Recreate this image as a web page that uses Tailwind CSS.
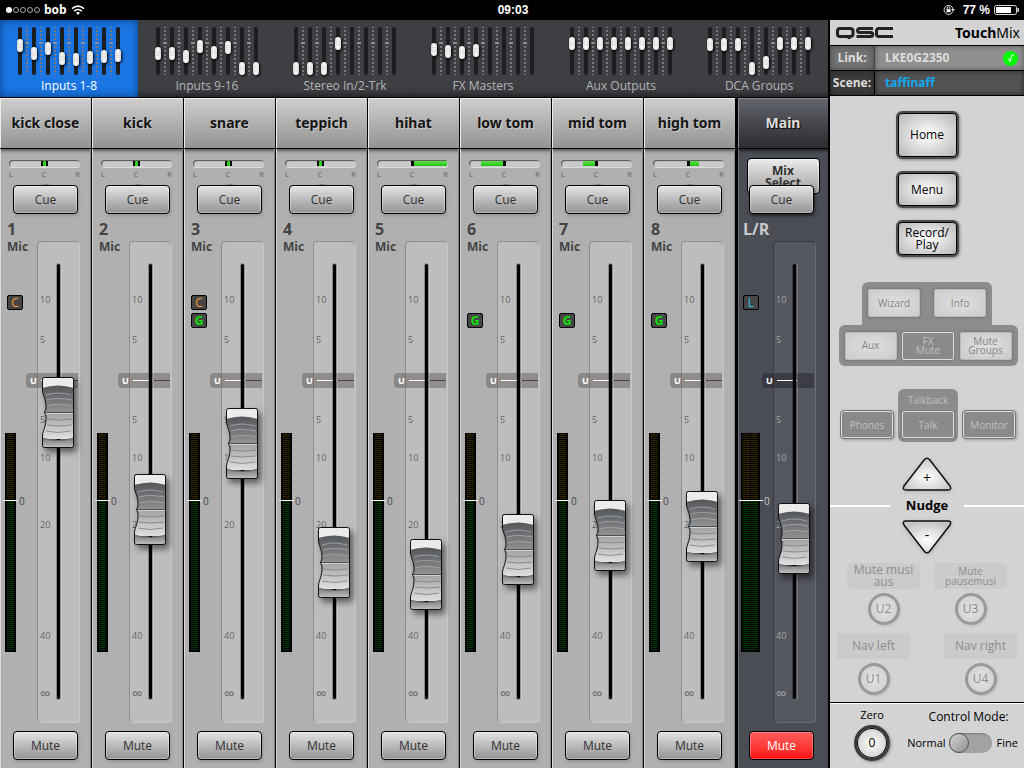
<!DOCTYPE html>
<html lang="en">
<head>
    <meta charset="UTF-8">
    <meta name="viewport" content="width=device-width, initial-scale=1.0">
    <title>TouchMix - Inputs 1-8</title>
    <script src="https://cdn.jsdelivr.net/npm/@tailwindcss/browser@4"></script>
</head>
<body class="min-h-screen flex flex-col bg-black text-[#222] font-['Open_Sans','Noto_Sans',sans-serif]">
    <!-- Shared artwork -->
    <svg class="absolute w-0 h-0">
        <defs>
            <linearGradient id="cap-upper" x1="0" y1="0" x2="0" y2="1">
                <stop offset="0.1" stop-color="#484b4e"/>
                <stop offset="1" stop-color="#919395"/>
            </linearGradient>
            <linearGradient id="cap-lower" x1="0" y1="0" x2="0" y2="1">
                <stop offset="0" stop-color="#a2a2a5"/>
                <stop offset="1" stop-color="#e0e0e2"/>
            </linearGradient>
            <linearGradient id="cap-foot" x1="0" y1="0" x2="0" y2="1">
                <stop offset="0" stop-color="#77797b"/>
                <stop offset="1" stop-color="#c2c4c5"/>
            </linearGradient>
            <radialGradient id="nudge-fill" cx="0.5" cy="0.6" r="0.6">
                <stop offset="0" stop-color="#ffffff"/>
                <stop offset="1" stop-color="#c4c4c4"/>
            </radialGradient>
            <clipPath id="cap-clip">
                <path d="M2.5 .5h27a2 2 0 0 1 2 2v66a2 2 0 0 1-2 2h-27a2 2 0 0 1-2-2V58C1 53 4.500 49 4 39L2.500 35.500 4 32C4.500 23 1 19 .5 14V2.500a2 2 0 0 1 2-2z"/>
            </clipPath>
        </defs>
        <symbol id="fader-cap" viewBox="0 0 32 71">
            <g clip-path="url(#cap-clip)">
                <rect width="32" height="36" fill="url(#cap-upper)"/>
                <rect y="36" width="32" height="26" fill="url(#cap-lower)"/>
                <path d="M0 0h32v11Q16 6 0 11z" fill="#edebe9"/>
                <path d="M0 61Q16 66 32 61V71H0z" fill="url(#cap-foot)"/>
                <path d="M0 61Q16 66 32 61" fill="none" stroke="#66686a"/>
                <g fill="none" stroke="#a9abac" stroke-width=".8">
                    <path d="M4 18Q16 14 29 18M5 23Q16 20 30 23M5 29Q16 26 30 29"/>
                </g>
                <g fill="none" stroke="#7c7d80" stroke-width=".8">
                    <path d="M5 42Q16 44 30 42M5 48Q16 50 30 48M4 54Q16 57 29 54"/>
                </g>
                <path d="M3 35.500H32" stroke="#4e5153"/>
                <path d="M3 36.500H32" stroke="#cfd1d3"/>
            </g>
            <path d="M2.500 .5h27a2 2 0 0 1 2 2v66a2 2 0 0 1-2 2h-27a2 2 0 0 1-2-2V58C1 53 4.500 49 4 39L2.500 35.500 4 32C4.500 23 1 19 .5 14V2.500a2 2 0 0 1 2-2z" fill="none" stroke="#111"/>
        </symbol>
    </svg>

    <!-- Device status bar -->
    <header class="h-5 shrink-0 grid grid-cols-3 items-center pl-1.5 pr-1 text-white text-xs leading-5 font-bold">
        <div class="flex items-center gap-1">
            <svg class="w-[34px] h-2" viewBox="0 0 34 8" fill="none" stroke="#aaa">
                <circle cx="3" cy="4" r="3" fill="#fff" stroke="none"/>
                <circle cx="10" cy="4" r="2.500"/>
                <circle cx="17" cy="4" r="2.500"/>
                <circle cx="24" cy="4" r="2.500"/>
                <circle cx="31" cy="4" r="2.500"/>
            </svg>
            <span>bob</span>
            <svg class="w-3.5 h-2.5" viewBox="0 0 14 10" fill="none" stroke="#fff" stroke-width="1.600">
                <path d="M1 3.600Q7-1.400 13 3.600M3.200 6Q7 3 10.800 6"/>
                <path d="M5 7.800Q7 6.200 9 7.800L7 10z" fill="#fff" stroke="none"/>
            </svg>
        </div>
        <div class="text-center font-['Liberation_Sans',sans-serif]">09:03</div>
        <div class="flex items-center justify-end gap-1 font-['Liberation_Sans',sans-serif]">
            <svg class="w-3 h-3 mr-1" viewBox="0 0 12 12" fill="none" stroke="#ddd">
                <path d="M9.800 7.500A4.500 4.500 0 1 1 10 5"/>
                <path d="M8 5h4l-2 2.500z" fill="#ddd" stroke="none"/>
                <rect x="3.500" y="5.200" width="4" height="3" fill="#fff" stroke="none"/>
                <path d="M4.200 5.200V4a1.300 1.300 0 0 1 2.600 0v1.200"/>
            </svg>
            <span>77 %</span>
            <svg class="w-[26px] h-2.5" viewBox="0 0 26 10">
                <rect x=".5" y=".5" width="22" height="9" rx="2" fill="none" stroke="#ddd"/>
                <rect x="2" y="2" width="15" height="6" fill="#fff"/>
                <path d="M24 3q1.500 2 0 4z" fill="#ddd" stroke="#ddd"/>
            </svg>
        </div>
    </header>

    <main class="flex-1 flex">
        <div class="flex-1 flex flex-col border-r-2 border-black">
            <nav id="banks" class="h-[78px] grid grid-cols-6 bg-[#3e3f43] border-b border-black"></nav>
            <div id="strips" class="flex-1 flex"></div>
        </div>

        <aside class="w-[194px] shrink-0 flex flex-col bg-[#d3d3d3]">
            <div class="h-[26px] flex items-center justify-between pl-1.5 pr-1 border-b border-black">
                <svg class="w-[57px] h-3" viewBox="0 0 57 12" fill="none" stroke="#222" stroke-width="3" role="img" aria-label="QSC">
                    <path d="M4 1.500H14Q17 1.500 17 4V7Q17 9.500 14 9.500H4Q1.500 9.500 1.500 7V4Q1.500 1.500 4 1.500z"/>
                    <path d="M11 10.500l1 1.500h3l-1-1.500z" fill="#222" stroke="none"/>
                    <path d="M37 1.500H24Q21.500 1.500 21.500 3.500T24 5.500H34.500Q36.800 5.500 36.800 7.500T34.500 9.500H20.500"/>
                    <path d="M57 1.500H43Q40.500 1.500 40.500 4V7Q40.500 9.500 43 9.500H57"/>
                </svg>
                <div class="text-sm font-['Noto_Sans',sans-serif] text-black"><b>Touch</b>Mix</div>
            </div>
            <div class="h-[25px] flex border-b border-black text-xs font-bold text-[#ddd]">
                <div class="w-[45px] flex items-center justify-center bg-[#737373] border-r border-[#444] shadow-[inset_0_0_6px_#444]">Link:</div>
                <div class="flex-1 flex items-center justify-between pl-2.5 pr-1.5 bg-[#8f8f8f] shadow-[inset_0_0_5px_#555]">
                    LKE0G2350
                    <svg class="w-[15px] h-[15px]" viewBox="0 0 15 15">
                        <circle cx="7.500" cy="7.500" r="7.500" fill="#0f0"/>
                        <path d="M4.500 8l1-.5 1.500 3L9 4h2" fill="none" stroke="#fff"/>
                    </svg>
                </div>
            </div>
            <div class="h-[25px] flex border-b border-black text-xs font-bold text-[#ddd]">
                <div class="w-[45px] flex items-center justify-center bg-[#3c3c3c] border-r border-black shadow-[inset_0_0_6px_#222]">Scene:</div>
                <div class="flex-1 flex items-center pl-2.5 bg-[#525252] text-[#12a8ee] shadow-[inset_0_0_5px_#222]">taffinaff</div>
            </div>

            <div class="flex flex-col items-center gap-3 pt-[15px] text-xs leading-3 text-black">
                <button class="w-[63px] h-12 rounded-md border-2 border-[#4c4c4c] bg-[radial-gradient(#fff,#b4b4b4)] shadow-[inset_0_0_0_1px_#000,1px_1px_3px_#888]">Home</button>
                <button class="w-[63px] h-[37px] rounded-md border-2 border-[#4c4c4c] bg-[radial-gradient(#fff,#b4b4b4)] shadow-[inset_0_0_0_1px_#000,1px_1px_3px_#888]">Menu</button>
                <button class="w-[63px] h-[37px] rounded-md border-2 border-[#4c4c4c] bg-[radial-gradient(#fff,#b4b4b4)] shadow-[inset_0_0_0_1px_#000,1px_1px_3px_#888]">Record/<br>Play</button>
            </div>

            <div class="mt-[25px] flex flex-col items-center text-[10px] leading-[9px] text-[#858585]">
                <div class="w-[130px] h-[43px] px-1.5 pt-[7px] flex justify-between items-start rounded-t-md bg-[#8c8c8c]">
                    <button class="w-[52px] h-7 rounded-xs border border-[#bbb] bg-[radial-gradient(#dfdfdf,#cbcbcb)] shadow-[0_0_3px_#666]">Wizard</button>
                    <button class="w-[52px] h-7 rounded-xs border border-[#bbb] bg-[radial-gradient(#dfdfdf,#cbcbcb)] shadow-[0_0_3px_#666]">Info</button>
                </div>
                <div class="w-[179px] h-[41px] ml-0.5 px-1.5 flex justify-between items-center rounded-md bg-[#8c8c8c]">
                    <button class="w-[52px] h-7 rounded-xs border border-[#bbb] bg-[radial-gradient(#dfdfdf,#cbcbcb)] shadow-[0_0_3px_#666]">Aux</button>
                    <button class="w-[52px] h-7 rounded-xs border border-[#ddd] bg-[#8a8a8a] text-[#c0c0c0] shadow-[0_0_2px_#555]">FX<br>Mute</button>
                    <button class="w-[52px] h-7 rounded-xs border border-[#bbb] bg-[radial-gradient(#dfdfdf,#cbcbcb)] shadow-[0_0_3px_#666]">Mute<br>Groups</button>
                </div>
            </div>

            <div class="mt-[23px] ml-0.5 flex justify-center items-end gap-1 text-[10px] leading-[10px] text-[#c0c0c0]">
                <button class="w-[54px] h-[29px] mb-[3px] rounded-sm border border-[#777] bg-[#8a8a8a] shadow-[inset_0_0_0_1px_#ddd,1px_1px_3px_#999]">Phones</button>
                <div class="w-[60px] h-[53px] pt-1.5 flex flex-col items-center gap-1.5 rounded-md bg-[#8c8c8c]">
                    <span>Talkback</span>
                    <button class="w-[52px] h-[27px] rounded-xs border border-[#ddd] bg-[#8a8a8a] shadow-[0_0_2px_#555]">Talk</button>
                </div>
                <button class="w-[54px] h-[29px] mb-[3px] rounded-sm border border-[#777] bg-[#8a8a8a] shadow-[inset_0_0_0_1px_#ddd,1px_1px_3px_#999]">Monitor</button>
            </div>

            <div class="mt-3.5 flex flex-col items-center text-black">
                <button class="relative w-[50px] h-9" aria-label="Nudge up">
                    <svg class="w-full h-full drop-shadow-sm" viewBox="0 0 50 36">
                        <path d="M22.500 3.500Q25 1 27.500 3.500L48 30Q50 34 46 34H4Q0 34 2 30z" fill="url(#nudge-fill)" stroke="#111" stroke-width="1.500"/>
                    </svg>
                    <span class="absolute inset-x-0 top-3 text-sm leading-5">+</span>
                </button>
                <div class="w-full h-[27px] flex items-center gap-3.5">
                    <span class="flex-1 h-0.5 bg-white"></span>
                    <span class="w-[46px] text-center text-[13px] font-bold">Nudge</span>
                    <span class="flex-1 h-0.5 bg-white"></span>
                </div>
                <button class="relative w-[50px] h-9" aria-label="Nudge down">
                    <svg class="w-full h-full drop-shadow-sm" viewBox="0 0 50 36">
                        <path d="M22.500 32.500Q25 35 27.500 32.500L48 6Q50 2 46 2H4Q0 2 2 6z" fill="url(#nudge-fill)" stroke="#111" stroke-width="1.500"/>
                    </svg>
                    <span class="absolute inset-x-0 top-1.5 text-sm leading-5">-</span>
                </button>
            </div>

            <!-- User buttons -->
            <div class="mt-2 flex justify-center gap-3.5 text-xs leading-3 text-[#8d8d8d]">
                <div class="flex flex-col items-center gap-1">
                    <div class="w-[73px] h-[26px] flex items-center justify-center text-center rounded-xs bg-[#cbcbcb]">Mute musi<br>aus</div>
                    <button class="w-8 h-8 rounded-full border-3 border-[#999] bg-[radial-gradient(#e2e2e2,#cecece)] shadow-[1px_1px_2px_#bbb]">U2</button>
                </div>
                <div class="flex flex-col items-center gap-1">
                    <div class="w-[73px] h-[26px] flex items-center justify-center text-center rounded-xs bg-[#cbcbcb] text-[10px] leading-[10px]">Mute<br>pausemusi</div>
                    <button class="w-8 h-8 rounded-full border-3 border-[#999] bg-[radial-gradient(#e2e2e2,#cecece)] shadow-[1px_1px_2px_#bbb]">U3</button>
                </div>
            </div>
            <div class="mt-2 px-[7px] flex justify-between text-xs leading-3 text-[#8d8d8d]">
                <div class="flex flex-col items-center gap-1">
                    <div class="w-[73px] h-[26px] flex items-center justify-center rounded-xs bg-[#cbcbcb]">Nav left</div>
                    <button class="w-8 h-8 rounded-full border-3 border-[#999] bg-[radial-gradient(#e2e2e2,#cecece)] shadow-[1px_1px_2px_#bbb]">U1</button>
                </div>
                <div class="flex flex-col items-center gap-1">
                    <div class="w-[73px] h-[26px] flex items-center justify-center rounded-xs bg-[#cbcbcb]">Nav right</div>
                    <button class="w-8 h-8 rounded-full border-3 border-[#999] bg-[radial-gradient(#e2e2e2,#cecece)] shadow-[1px_1px_2px_#bbb]">U4</button>
                </div>
            </div>

            <div class="mt-auto h-[66px] pl-6 pr-1.5 pt-1 flex justify-between border-t border-black shadow-[inset_0_1px_0_#fff] text-[11px] text-black">
                <div class="w-9 flex flex-col items-center">
                    <label for="zero" class="leading-4">Zero</label>
                    <button id="zero" class="w-9 h-9 mt-0.5 shrink-0 rounded-full border-3 border-[#3a3a3a] bg-[radial-gradient(#fff,#c0c0c0)] shadow-[inset_0_0_0_1px_#000,1px_1px_3px_#888] text-xs">0</button>
                </div>
                <div class="flex flex-col items-center">
                    <div class="mt-0.5 pl-3 text-xs leading-4">Control Mode:</div>
                    <label class="mt-2 flex items-center gap-[3px] leading-5">
                        Normal
                        <input type="checkbox" class="peer sr-only" aria-label="Fine control mode">
                        <span class="w-[43px] h-5 rounded-full bg-[#a3a3a3] shadow-[inset_1px_1px_2px_#777] before:block before:w-5 before:h-5 before:rounded-full before:border before:border-[#555] before:bg-linear-to-br before:from-[#d5d5d5] before:to-[#8f8f8f] peer-checked:before:translate-x-[23px]"></span>
                        <span class="ml-0.5">Fine</span>
                    </label>
                </div>
            </div>
        </aside>
    </main>

    <script>
        // cap positions are px from the top of the small slots
        const banks = [
            { name: 'Inputs 1-8', caps: [12, 20, 15, 25, 26, 24, 23, 22], active: true },
            { name: 'Inputs 9-16', caps: [20, 20, 23, 13, 19, 14, 35, 35] },
            { name: 'Stereo In/2-Trk', caps: [35, 35, 35, 10, null, null, null, null] },
            { name: 'FX Masters', caps: [16, 18, 19, 17, null, null, null, null] },
            { name: 'Aux Outputs', caps: [10, 10, 10, 10, 10, 10, 10, 10] },
            { name: 'DCA Groups', caps: [11, 11, 11, 35, 29, 10, 10, 10] },
        ];

        // pos: px from the top of the fader panel, pan: px left or right of centre
        const channels = [
            { name: 'kick close', label: '1', source: 'Mic', pan: 0, pos: 136, comp: true },
            { name: 'kick', label: '2', source: 'Mic', pan: 0, pos: 233 },
            { name: 'snare', label: '3', source: 'Mic', pan: 0, pos: 167, comp: true, gate: true },
            { name: 'teppich', label: '4', source: 'Mic', pan: 0, pos: 286 },
            { name: 'hihat', label: '5', source: 'Mic', pan: 33, pos: 298 },
            { name: 'low tom', label: '6', source: 'Mic', pan: -22, pos: 273, gate: true },
            { name: 'mid tom', label: '7', source: 'Mic', pan: -12, pos: 259, gate: true },
            { name: 'high tom', label: '8', source: 'Mic', pan: 9, pos: 250, gate: true },
            { name: 'Main', label: 'L/R', source: '', pos: 262, limiter: true, main: true, muted: true },
        ];

        const scale = [['10', 57], ['5', 97], ['5', 177], ['10', 215], ['20', 282], ['40', 393], ['∞', 451]];

        function miniFader(top, i) {
            const ticks = i < 7 ? `
                <div class="w-2 h-12 mx-[1px] bg-[radial-gradient(circle,#77797c_1px,transparent_1px)] bg-[size:2px_4px] bg-repeat-y bg-center flex flex-col">
                    <span class="w-1 h-0.5 mt-[15px] mx-auto bg-[#8d8f92]"></span>
                </div>` : '';
            const cap = top === null ? '' : `
                <span class="absolute -left-px w-1.5 h-[13px] rounded-[3px] bg-linear-to-r from-[#d8d8d8] via-white to-[#d8d8d8] shadow-[1px_1px_3px_#000] flex flex-col items-center justify-center gap-px" style="top: ${top}px">
                    <i class="w-1 h-px bg-[#ddd]"></i><i class="w-1 h-px bg-[#ddd]"></i><i class="w-1 h-px bg-[#ddd]"></i>
                </span>`;
            return `<div class="relative w-1 h-12 rounded-full bg-[#1d1e20]">${cap}</div>${ticks}`;
        }

        function bank(b) {
            const look = b.active
                ? 'bg-[#1a75e2] text-white shadow-[inset_0_0_8px_#0b3f85]'
                : 'text-[#b4b4b6] shadow-[inset_0_-8px_6px_-6px_#1c1d20]';
            return `
                <a href="#" class="flex flex-col items-center pt-[7px] ${look}">
                    <div class="flex">${b.caps.map(miniFader).join('')}</div>
                    <span class="mt-[3px] text-xs leading-4">${b.name}</span>
                </a>`;
        }

        function panBar(pan) {
            if (pan === 0) {
                return '<span class="absolute inset-y-px left-8 w-[7px] bg-[#2fd21a] border-x-2 border-black"></span>';
            }
            const side = pan > 0 ? `left: 37px; width: ${pan}px` : `right: 37px; width: ${-pan}px`;
            return `
                <span class="absolute inset-y-px left-[34px] w-[3px] bg-black"></span>
                <span class="absolute inset-y-px bg-linear-to-b from-[#5ae048] to-[#1fc60a]" style="${side}"></span>`;
        }

        function meter(count) {
            return `<div class="flex gap-px h-[219px] px-0.5 py-px bg-black">` + `
                <div class="w-[7px] flex flex-col">
                    <div class="h-[67px] bg-[repeating-linear-gradient(#332900_0_1px,#000_1px_2px)]"></div>
                    <div class="flex-1 bg-[repeating-linear-gradient(#033a06_0_1px,#000_1px_2px)]"></div>
                </div>`.repeat(count) + '</div>';
        }

        function badge(letter, on, color) {
            return `<span class="w-4 h-[15px] flex items-center justify-center rounded-xs border text-xs leading-3 ${color} ${on ? 'border-black bg-[#464646]' : 'invisible'}">${letter}</span>`;
        }

        function strip(c, i) {
            const m = c.main;
            const top = m ? `
                <div class="h-9 pt-[9px] flex justify-center">
                    <button class="w-[73px] h-9 pt-1.5 shrink-0 flex justify-center rounded-sm border border-black bg-linear-to-b from-[#ececec] to-[#a0a0a0] text-xs leading-3 font-bold text-[#333] shadow-[inset_0_0_0_1px_#fff6]">Mix<br>Select</button>
                </div>` : `
                <div class="h-9 pt-[11px] px-[9px]">
                    <div class="relative w-[71px] h-[7px] rounded-sm bg-[#c9c9cd] shadow-[inset_1px_1px_1px_#555,0_1px_0_#ddd]">${panBar(c.pan)}</div>
                    <div class="w-[71px] mt-0.5 flex justify-between text-[8px] leading-[10px] text-[#666]">
                        <span>L</span><span>C</span><span>R</span>
                    </div>
                    <div class="w-2 h-0.5 mt-[5px] mx-auto rounded-t-full bg-[#888]"></div>
                </div>`;
            const width = m ? 'basis-[90px]' : i === 7 ? 'basis-[94px] border-r-3' : 'basis-[92px] border-r';
            return `
                <section class="${width} grow border-black flex flex-col items-center ${m ? 'bg-[#4b4d55] text-[#c8c8c8]' : 'bg-[#b0b0b0] text-[#444]'}">
                    <h2 class="w-full h-[51px] flex items-center justify-center border-b border-black text-sm font-bold font-['Noto_Sans',sans-serif] ${m ? 'bg-linear-to-b from-[#64666e] to-[#2b2c30] text-[#ddd] [text-shadow:1px_1px_1px_#000] shadow-[inset_1px_1px_0_#8b8d93]' : 'bg-linear-to-b from-[#cfcfcd] to-[#939393] text-[#161616] [text-shadow:1px_1px_0_#ccc] shadow-[inset_1px_1px_0_#eee]'}">${c.name}</h2>
                    <div class="w-full flex-1 flex flex-col items-center ${m ? 'shadow-[inset_1px_0_0_#70727a,inset_0_4px_4px_-3px_#111]' : 'shadow-[inset_1px_0_0_#ddd,inset_-1px_0_0_#888,inset_0_4px_4px_-3px_#333]'}">
                        <div class="${m ? 'w-[90px]' : 'w-[91px]'}">
                            ${top}
                            <button class="relative block w-[65px] h-[29px] ${m ? 'ml-[11px]' : 'ml-[13px]'} rounded-sm border border-black bg-linear-to-b from-[#e4e4e4] to-[#949494] text-xs text-[#333] ${m ? 'shadow-[inset_0_0_0_1px_#fff5,1px_2px_3px_#0008]' : 'shadow-[inset_0_0_0_1px_#fff5,1px_2px_3px_#888a]'}">Cue</button>
                            <div class="relative flex h-[508px]">
                                <div class="${m ? 'w-[35px] pl-[5px]' : 'w-[37px] pl-[7px]'} pt-[7px] flex flex-col">
                                    <div class="text-base leading-4 font-bold">${c.label}</div>
                                    <div class="h-4 mt-0.5 text-xs leading-4 font-bold">${c.source}</div>
                                    <div class="mt-10 flex flex-col gap-[3px]">
                                        ${m ? badge('L', c.limiter, 'text-[#19c5e8]') : badge('C', c.comp, 'text-[#f0a020]')}
                                        ${badge('G', c.gate, 'font-bold text-[#0be00b]')}
                                    </div>
                                </div>
                                <div class="absolute top-[219px] ${m ? 'left-[3px]' : 'left-[5px]'}">
                                    ${meter(m ? 2 : 1)}
                                    <div class="absolute top-[67px] -left-0.5 flex items-center h-px">
                                        <span class="h-px bg-white ${m ? 'w-6' : 'w-[15px]'}"></span>
                                        <span class="ml-px text-[10px] leading-none">0</span>
                                    </div>
                                </div>
                                <div class="relative w-[42px] h-[481px] mt-[27px] rounded border-l border-t ${m ? 'bg-[#55575f] border-[#383a40] text-[#a8a8a8] shadow-[1px_1px_0_#6b6d74]' : 'bg-[#bdbdbd] border-[#8e8e8e] text-[#666] shadow-[1px_1px_0_#c8c8c8]'} text-[9px] leading-none">
                                    ${scale.map(([t, y]) => `<span class="absolute left-0.5 -translate-y-1/2 ${t === '∞' ? 'text-[15px]' : ''}" style="top: ${y}px">${t}</span>`).join('')}
                                    <div class="absolute top-[131px] -left-3 w-[52px] h-[15px] pl-1 flex items-center gap-1 rounded-l-sm ${m ? 'bg-[#2b2c32]/60' : 'bg-[#6e6664]/55'} text-[9px] font-bold text-white">
                                        U<span class="w-5 h-px bg-white"></span><span class="flex-1 h-px -ml-1 bg-[#444]"></span>
                                    </div>
                                    <div class="absolute left-[19px] top-[22px] w-[3px] h-[435px] rounded-full bg-black shadow-[0_0_0_1px_#0004,1px_0_0_1px_#fff3]"></div>
                                    <svg class="absolute left-1 w-8 h-[71px] drop-shadow-[3px_4px_3px_#0008]" style="top: ${c.pos - 1}px"><use href="#fader-cap"/></svg>
                                    <input type="range" min="101" max="422" value="${523 - c.pos}" aria-label="${c.name} level" class="absolute left-1 top-6 w-8 h-[430px] opacity-0 [writing-mode:vertical-lr] [direction:rtl]">
                                </div>
                            </div>
                            <button class="block w-[65px] h-[29px] mt-[9px] ${m ? 'ml-[11px]' : 'ml-[13px]'} rounded-sm border border-black text-xs ${c.muted ? 'bg-linear-to-b from-[#ff5a5a] to-[#fb0303] text-white shadow-[inset_0_0_0_1px_#fff4]' : 'bg-linear-to-b from-[#e4e4e4] to-[#949494] text-[#333] shadow-[inset_0_0_0_1px_#fff5,1px_2px_3px_#888a]'}">Mute</button>
                        </div>
                    </div>
                </section>`;
        }

        document.getElementById('banks').innerHTML = banks.map(bank).join('');
        document.getElementById('strips').innerHTML = channels.map(strip).join('');

        document.querySelectorAll('#strips input').forEach((input) => {
            input.addEventListener('input', () => {
                input.previousElementSibling.style.top = `${522 - input.value}px`;
            });
        });
    </script>
</body>
</html>
